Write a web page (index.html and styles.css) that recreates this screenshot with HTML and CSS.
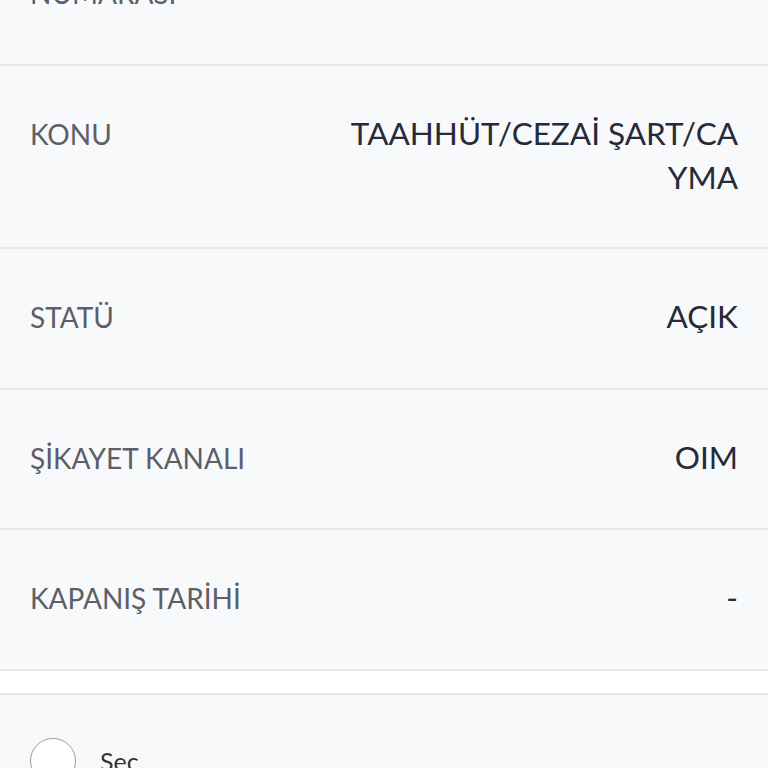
FILE: index.html
```html
<!DOCTYPE html>
<html lang="tr">

<head>
    <meta charset="UTF-8">
    <meta name="viewport" content="width=device-width, initial-scale=1.0">
    <title>Şikayet Detayı</title>
    <link rel="stylesheet" href="styles.css">
</head>

<body>
    <div class="page">
        <!-- Şikayet bilgileri -->
        <div class="details">
            <div class="row">
                <span class="label">ŞİKAYET TAKİP<br>NUMARASI</span>
                <span class="value">2023000481</span>
            </div>
            <div class="row">
                <span class="label">KONU</span>
                <span class="value">TAAHHÜT/CEZAİ ŞART/CAYMA</span>
            </div>
            <div class="row">
                <span class="label">STATÜ</span>
                <span class="value">AÇIK</span>
            </div>
            <div class="row">
                <span class="label">ŞİKAYET KANALI</span>
                <span class="value">OIM</span>
            </div>
            <div class="row">
                <span class="label">KAPANIŞ TARİHİ</span>
                <span class="value">-</span>
            </div>
        </div>

        <div class="spacer"></div>

        <!-- Seçim alanı -->
        <div class="select-box">
            <label class="select-row">
                <span class="radio"></span>
                <span class="select-text">Seç</span>
            </label>
        </div>
    </div>
</body>

</html>
```

FILE: styles.css
```css
body {
    font-family: Lato, "Open Sans", sans-serif;
    margin: 0;
    padding: 0;
    background-color: #ffffff;
    overflow: hidden;
}

/* sayfa kaydırılmış halde */
.page {
    margin-top: -119px;
}

.details {
    background-color: #f8f9fa;
}

.row {
    display: flex;
    justify-content: space-between;
    align-items: baseline;
    padding: 45px 30px 48.5px;
    border-bottom: 2px solid #e6e8ee;
}

.label {
    color: #5c5e68;
    font-size: 28px;
    line-height: 44px;
    flex: 0 0 auto;
}

.value {
    color: #272a38;
    font-size: 31.5px;
    line-height: 44px;
    width: 392px;
    text-align: right;
    word-break: break-all;
}

.spacer {
    height: 22px;
    background-color: #ffffff;
    border-bottom: 2px solid #e6e8ee;
}

.select-box {
    background-color: #f8f8f9;
    padding: 43px 30px;
}

.select-row {
    display: flex;
    align-items: center;
}

.radio {
    width: 44px;
    height: 44px;
    border: 1.5px solid #9c9ca0;
    border-radius: 50%;
    background-color: #ffffff;
    margin-right: 24px;
}

.select-text {
    color: #333333;
    font-size: 25px;
}
```
